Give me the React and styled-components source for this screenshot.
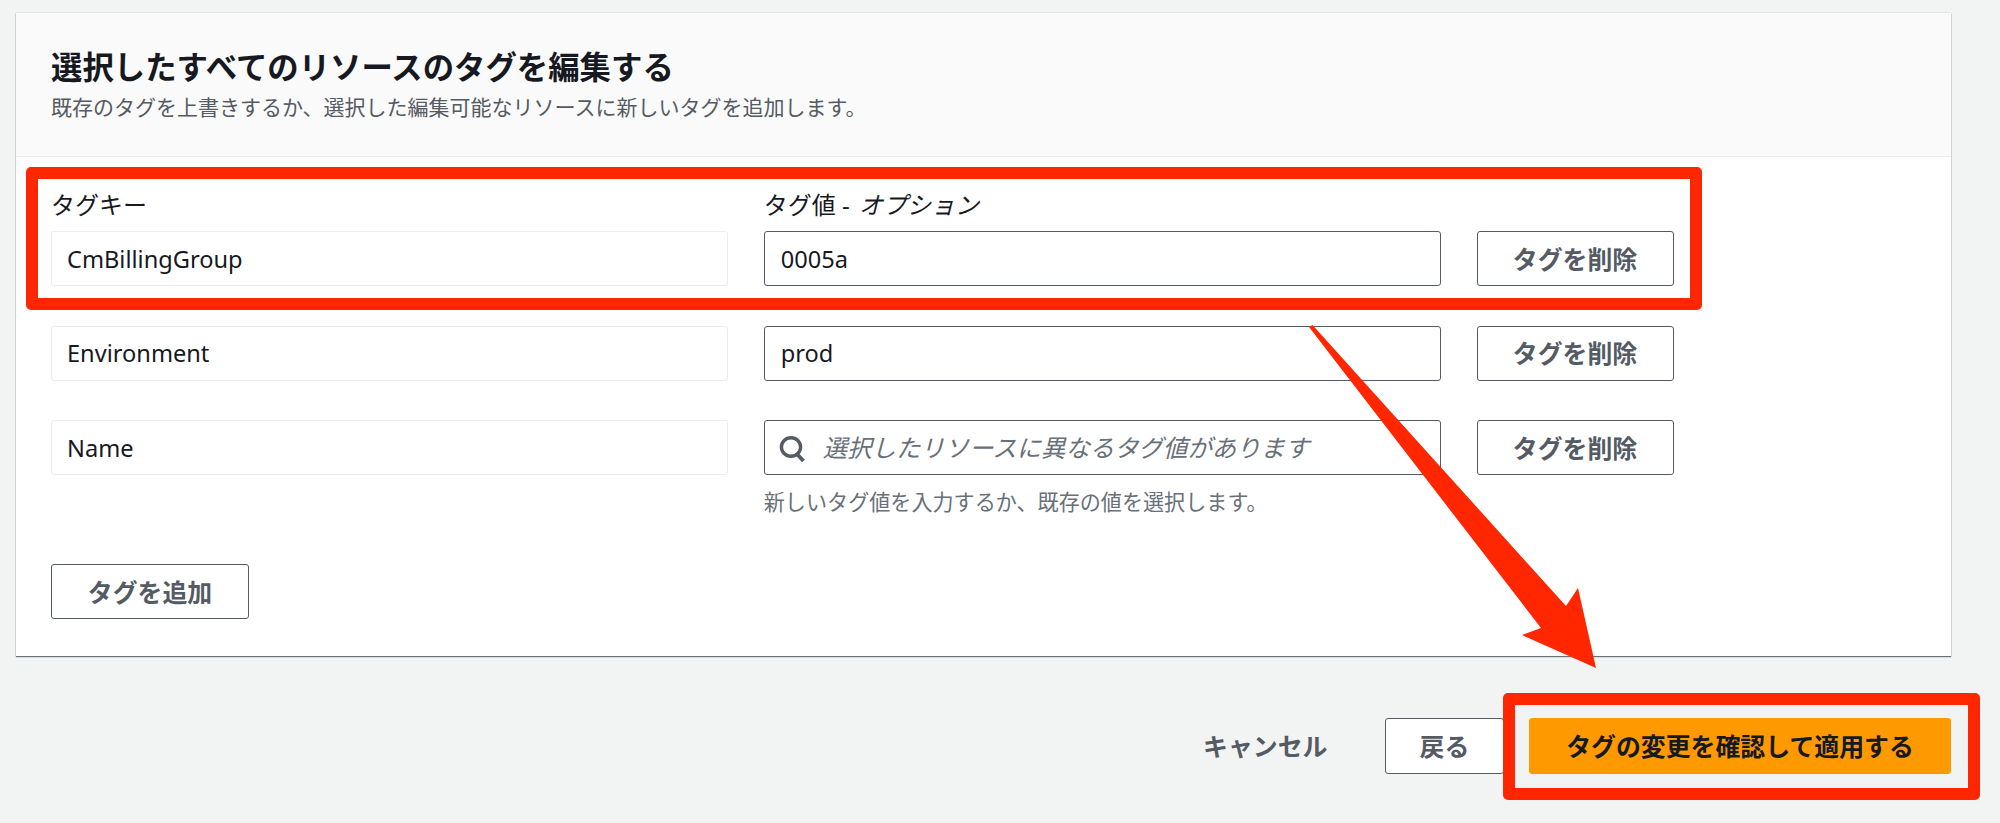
import React from 'react'
import styled, { createGlobalStyle } from 'styled-components'

const GlobalStyle = createGlobalStyle`
  html, body {
    margin: 0;
    padding: 0;
    background: #f2f3f3;
  }
  * {
    box-sizing: border-box;
  }
`

const Page = styled.div`
  position: relative;
  width: 2000px;
  height: 823px;
  overflow: hidden;
  padding: 13px 49px 0 16px;
  font-family: "Noto Sans", "Noto Sans CJK JP", sans-serif;
  font-size: 23.6px;
  color: #16191f;
`

const Card = styled.section`
  background: #fff;
  height: 643px;
  box-shadow: 0 1px 1px 0 rgba(84, 91, 100, 0.85), 0 0 1px 0 rgba(0, 28, 36, 0.3);
`

const CardHeader = styled.header`
  height: 144px;
  background: #fafafa;
  border-bottom: 1.5px solid #eaeded;
  padding: 34px 35px 0;
`

const Title = styled.h2`
  margin: 0;
  font-size: 31.4px;
  line-height: 40px;
  font-weight: 700;
  color: #16191f;
`

const Description = styled.p`
  margin: 6px 0 0;
  font-size: 21px;
  line-height: 28px;
  color: #545b64;
`

const CardBody = styled.div`
  padding: 30px 35px 0;
`

const TagRows = styled.div`
  display: flex;
  flex-direction: column;
  gap: 39.5px;
  width: 1623px;
`

const TagRow = styled.div`
  position: relative;
  display: grid;
  grid-template-columns: 677px 677px 197px;
  column-gap: 35.75px;
  row-gap: 9px;
`

const ColumnLabel = styled.label`
  font-size: 24px;
  line-height: 35px;
  color: #16191f;
`

const LabelEm = styled.em`
  font-style: italic;
  margin-left: 3px;
`

const Field = styled.div`
  height: 55px;
  display: flex;
  align-items: center;
  padding: 2px ${props => (props.$readonly ? '15px' : '16px')} 0;
  border-radius: 3px;
  border: 1.5px solid ${props => (props.$readonly ? '#eaeded' : '#545b64')};
  background: #fff;
  color: #16191f;
  line-height: 1;
`

const Placeholder = styled.span`
  font-style: italic;
  font-size: 24.4px;
  color: #687078;
  margin-left: 17px;
  white-space: nowrap;
`

const HelpText = styled.p`
  grid-column: 2;
  margin: 3px 0 0;
  font-size: 21.1px;
  line-height: 30px;
  color: #687078;
  white-space: nowrap;
`

const Button = styled.button`
  height: ${props => (props.$tall ? '56px' : '55px')};
  font-family: inherit;
  font-size: 24.9px;
  font-weight: 700;
  line-height: 1;
  color: #545b64;
  background: #fff;
  border: 1.5px solid #545b64;
  border-radius: 3px;
  padding: 1px 0 0;
  white-space: nowrap;
`

const AddButton = styled(Button)`
  display: block;
  width: 198px;
  margin-top: 47px;
`

const CardFooter = styled.footer`
  position: relative;
  display: flex;
  justify-content: flex-end;
  align-items: center;
  margin-top: 62px;
`

const CancelButton = styled(Button)`
  background: transparent;
  border: none;
  width: 121px;
  margin-right: 61px;
`

const BackButton = styled(Button)`
  width: 119px;
  margin-right: 25px;
`

const PrimaryWrap = styled.div`
  position: relative;
`

const PrimaryButton = styled(Button)`
  display: block;
  width: 422px;
  background: #ff9900;
  border-color: #ff9900;
  color: #16191f;
`

const RedOutline = styled.div`
  position: absolute;
  top: ${props => props.$top}px;
  left: ${props => props.$left}px;
  right: ${props => props.$right}px;
  bottom: ${props => props.$bottom}px;
  border: 12px solid #ff2600;
  border-radius: 5px;
  pointer-events: none;
`

const ArrowOverlay = styled.svg`
  position: absolute;
  top: 0;
  left: 0;
  pointer-events: none;
`

const SearchSvg = styled.svg`
  flex: none;
  margin-left: -2px;
`

const SearchIcon = () => (
  <SearchSvg width="27" height="26" viewBox="0 0 27 26" fill="none" stroke="#545b64" strokeWidth="3.4">
    <ellipse cx="12" cy="11" rx="9.6" ry="9.2" />
    <path d="M18 18 L24.5 25" strokeWidth="3.8" />
  </SearchSvg>
)

const rows = [
  { key: 'Environment', value: 'prod' },
]

const App = () => (
  <Page>
    <GlobalStyle />
    <Card>
      <CardHeader>
        <Title>選択したすべてのリソースのタグを編集する</Title>
        <Description>既存のタグを上書きするか、選択した編集可能なリソースに新しいタグを追加します。</Description>
      </CardHeader>
      <CardBody>
        <TagRows>
          <TagRow>
            <ColumnLabel>タグキー</ColumnLabel>
            <ColumnLabel>タグ値 - <LabelEm>オプション</LabelEm></ColumnLabel>
            <span />
            <Field $readonly>CmBillingGroup</Field>
            <Field>0005a</Field>
            <Button>タグを削除</Button>
            <RedOutline $top={-20} $left={-25} $right={-28} $bottom={-24} />
          </TagRow>
          {rows.map(row => (
            <TagRow key={row.key}>
              <Field $readonly>{row.key}</Field>
              <Field>{row.value}</Field>
              <Button>タグを削除</Button>
            </TagRow>
          ))}
          <TagRow>
            <Field $readonly>Name</Field>
            <Field>
              <SearchIcon />
              <Placeholder>選択したリソースに異なるタグ値があります</Placeholder>
            </Field>
            <Button>タグを削除</Button>
            <HelpText>新しいタグ値を入力するか、既存の値を選択します。</HelpText>
          </TagRow>
        </TagRows>
        <AddButton>タグを追加</AddButton>
      </CardBody>
    </Card>
    <CardFooter>
      <CancelButton $tall>キャンセル</CancelButton>
      <BackButton $tall>戻る</BackButton>
      <PrimaryWrap>
        <PrimaryButton $tall>タグの変更を確認して適用する</PrimaryButton>
        <RedOutline $top={-25} $left={-26} $right={-29} $bottom={-26} />
      </PrimaryWrap>
    </CardFooter>
    <ArrowOverlay width="2000" height="823" viewBox="0 0 2000 823">
      <polygon fill="#ff2600" points="1309,327 1312.5,325 1566,606 1578,588 1596,668 1522,635 1541,628" />
    </ArrowOverlay>
  </Page>
)

export default App
